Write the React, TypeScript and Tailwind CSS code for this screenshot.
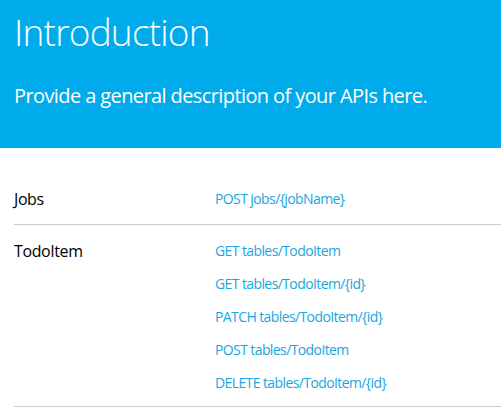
const apis = [
  { name: "Jobs", links: ["POST jobs/{jobName}"] },
  {
    name: "TodoItem",
    links: [
      "GET tables/TodoItem",
      "GET tables/TodoItem/{id}",
      "PATCH tables/TodoItem/{id}",
      "POST tables/TodoItem",
      "DELETE tables/TodoItem/{id}",
    ],
  },
];

export default function App() {
  return (
    <div className="min-h-screen bg-white font-['Open_Sans',sans-serif]">
      {/* Header */}
      <div className="h-[148px] bg-[#00abec] px-[14px] pt-[8px] text-white">
        <h1 className="text-[37px] font-light leading-[48px] tracking-[-0.8px]">Introduction</h1>
        <p className="mt-[26px] text-[20px] leading-[28px] tracking-[-0.6px]">
          Provide a general description of your APIs here.
        </p>
      </div>

      {/* API table */}
      <div className="ml-[14px] mt-[25px]">
        {apis.map((api) => (
          <div
            key={api.name}
            className="grid grid-cols-[201px_1fr] border-b border-[#cccccc] pt-[14px] pb-[13px]"
          >
            <div className="text-[16px] leading-[24px] tracking-[-0.4px] text-black">{api.name}</div>
            <div className="flex flex-col gap-[13px] pt-[2px]">
              {api.links.map((link) => (
                <a key={link} href="#" className="text-[14px] leading-[20px] tracking-[-0.6px] text-[#19a6e0]">
                  {link}
                </a>
              ))}
            </div>
          </div>
        ))}
      </div>
    </div>
  );
}
